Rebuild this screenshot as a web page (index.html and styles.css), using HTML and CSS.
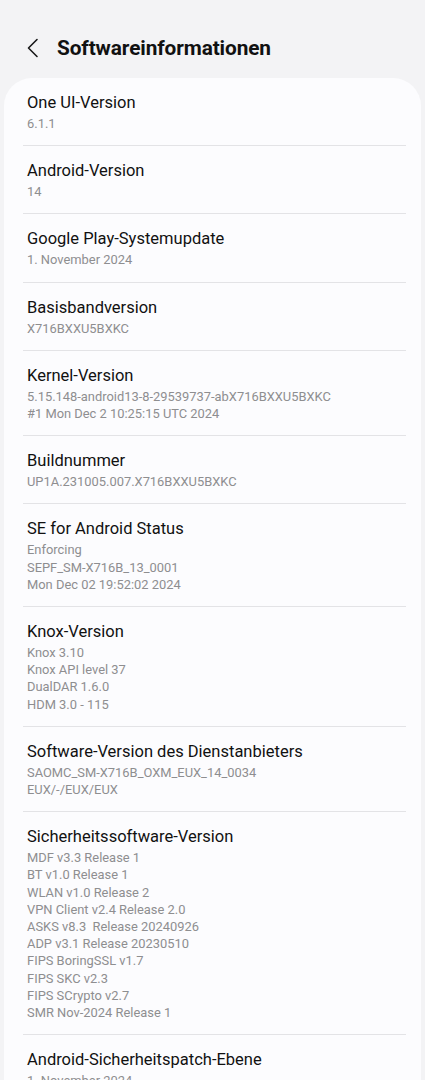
FILE: index.html
```html
<!DOCTYPE html>
<html lang="de">
<head>
<meta charset="utf-8">
<link rel="stylesheet" href="styles.css">
</head>
<body>
<div class="screen">
  <header class="topbar">
    <svg class="back" width="14" height="20" viewBox="0 0 14 20"><path d="M11 1.5 L2.5 10 L11 18.5" fill="none" stroke="#1a1a1a" stroke-width="1.6" stroke-linecap="round" stroke-linejoin="round"/></svg>
    <h1 class="title">Softwareinformationen</h1>
  </header>
  <main class="card">
    <div class="item"><div class="label">One UI-Version</div><div class="value">6.1.1</div></div>
    <div class="item"><div class="label">Android-Version</div><div class="value">14</div></div>
    <div class="item"><div class="label">Google Play-Systemupdate</div><div class="value">1. November 2024</div></div>
    <div class="item"><div class="label">Basisbandversion</div><div class="value">X716BXXU5BXKC</div></div>
    <div class="item"><div class="label">Kernel-Version</div><div class="value">5.15.148-android13-8-29539737-abX716BXXU5BXKC<br>#1 Mon Dec 2 10:25:15 UTC 2024</div></div>
    <div class="item"><div class="label">Buildnummer</div><div class="value">UP1A.231005.007.X716BXXU5BXKC</div></div>
    <div class="item"><div class="label">SE for Android Status</div><div class="value">Enforcing<br>SEPF_SM-X716B_13_0001<br>Mon Dec 02 19:52:02 2024</div></div>
    <div class="item"><div class="label">Knox-Version</div><div class="value">Knox 3.10<br>Knox API level 37<br>DualDAR 1.6.0<br>HDM 3.0 - 115</div></div>
    <div class="item"><div class="label">Software-Version des Dienstanbieters</div><div class="value">SAOMC_SM-X716B_OXM_EUX_14_0034<br>EUX/-/EUX/EUX</div></div>
    <div class="item"><div class="label">Sicherheitssoftware-Version</div><div class="value">MDF v3.3 Release 1<br>BT v1.0 Release 1<br>WLAN v1.0 Release 2<br>VPN Client v2.4 Release 2.0<br>ASKS v8.3&nbsp; Release 20240926<br>ADP v3.1 Release 20230510<br>FIPS BoringSSL v1.7<br>FIPS SKC v2.3<br>FIPS SCrypto v2.7<br>SMR Nov-2024 Release 1</div></div>
    <div class="item"><div class="label">Android-Sicherheitspatch-Ebene</div><div class="value">1. November 2024</div></div>
  </main>
</div>
</body>
</html>
```
FILE: styles.css
```css
html, body {
  margin: 0;
  padding: 0;
  background: #f3f3f5;
}
body {
  font-family: Roboto, "Noto Sans", sans-serif;
  color: #111;
  overflow: hidden;
}
.screen {
  width: 425px;
  height: 1080px;
  overflow: hidden;
}
.topbar {
  display: flex;
  align-items: center;
  height: 78px;
  padding: 17px 0 0 26px;
  box-sizing: border-box;
}
.back {
  display: block;
  margin-right: 17px;
}
.title {
  margin: 0;
  font-size: 20.8px;
  font-weight: 700;
  color: #111;
  letter-spacing: -0.1px;
}
.card {
  margin: 0 4px;
  background: #fcfcfe;
  border-radius: 28px 28px 0 0;
  padding: 0 15px 0 19px;
}
.item {
  padding: 14px 0 13px 4px;
  border-bottom: 1px solid #e3e3e6;
}
.label {
  font-size: 16.5px;
  line-height: 22px;
  color: #111;
  margin-bottom: 1px;
}
.value {
  font-size: 12.9px;
  line-height: 17.2px;
  color: #8e8e90;
}
```
